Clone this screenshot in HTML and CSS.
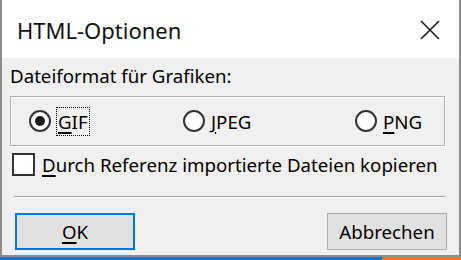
FILE: index.html
```html
<!DOCTYPE html>
<html lang="de">

<head>
    <meta charset="UTF-8">
    <title>HTML-Optionen</title>
    <link rel="stylesheet" href="styles.css">
</head>

<body>
    <div class="dialog">
        <div class="titlebar">
            <span class="title">HTML-Optionen</span>
            <svg class="close" width="20" height="20" viewBox="0 0 20 20">
                <path d="M1 1 L19 19 M19 1 L1 19" stroke="#1a1a1a" stroke-width="1.6" fill="none"/>
            </svg>
        </div>

        <div class="content">
            <div class="label">Dateiformat für Grafiken:</div>

            <div class="group">
                <label class="radio">
                    <span class="dot checked"></span>
                    <span class="focus"><u>G</u>IF</span>
                </label>
                <label class="radio">
                    <span class="dot"></span>
                    <span class="text"><u>J</u>PEG</span>
                </label>
                <label class="radio">
                    <span class="dot"></span>
                    <span class="text"><u>P</u>NG</span>
                </label>
            </div>

            <label class="check">
                <span class="box"></span>
                <span><u>D</u>urch Referenz importierte Dateien kopieren</span>
            </label>

            <hr class="sep">

            <div class="buttons">
                <button class="btn default"><u>O</u>K</button>
                <button class="btn">Abbrechen</button>
            </div>
        </div>
        <div class="taskbar">
            <span class="blue"></span>
            <span class="orange"></span>
        </div>
    </div>
</body>

</html>
```

FILE: styles.css
```css
body {
    margin: 0;
    width: 461px;
    height: 260px;
    overflow: hidden;
    font-family: "Noto Sans", "Open Sans", sans-serif;
    color: #000;
}

u {
    text-decoration-thickness: 2px;
    text-underline-offset: 3px;
}

.dialog {
    display: flex;
    flex-direction: column;
    height: 260px;
    box-sizing: border-box;
    border-left: 2px solid #8c8c8c;
    border-right: 2px solid #8c8c8c;
    background: #f0f0f0;
}

.titlebar {
    display: flex;
    align-items: center;
    justify-content: space-between;
    height: 58px;
    background: #fff;
    padding: 2px 19px 0 15px;
    box-sizing: border-box;
}

.title {
    font-size: 22px;
    color: #111;
}

.content {
    flex: 1;
    padding: 4px 14px 0 8px;
    font-size: 18.7px;
}

.label {
    height: 28px;
    line-height: 28px;
}

.group {
    display: grid;
    grid-template-columns: 154px 172px auto;
    align-items: center;
    height: 48px;
    margin-top: 6px;
    padding: 0 0 0 18px;
    border: 1px solid #b0b0b0;
    box-shadow: inset 1px 1px 0 #fff, 1px 1px 0 #fff;
}

.radio {
    display: flex;
    align-items: center;
    gap: 6px;
}

.dot {
    width: 18px;
    height: 18px;
    border: 2px solid #333;
    border-radius: 50%;
    background: #fff;
    position: relative;
}

.dot.checked::after {
    content: "";
    position: absolute;
    left: 4px;
    top: 4px;
    width: 10px;
    height: 10px;
    border-radius: 50%;
    background: #1a1a1a;
}

.focus {
    outline: 1px dotted #000;
    padding: 1px 1px;
}

.check {
    display: flex;
    align-items: center;
    gap: 7px;
    margin-top: 6px;
    padding-left: 2px;
}

.box {
    width: 19px;
    height: 19px;
    border: 2px solid #333;
    background: #fff;
}

.sep {
    margin: 19px 0 0 4px;
    border: 0;
    border-top: 1px solid #a0a0a0;
    border-bottom: 1px solid #fff;
}

.buttons {
    display: flex;
    justify-content: space-between;
    margin: 15px -2px 0 0;
    padding-left: 5px;
}

.btn {
    width: 120px;
    height: 37px;
    font-family: inherit;
    font-size: 18.7px;
    background: #e1e1e1;
    border: 1px solid #adadad;
    padding: 0;
}

.btn.default {
    border: 2px solid #0078d7;
}

.taskbar {
    display: flex;
    height: 3px;
    border-top: 2px solid #8c8c8c;
    margin: auto -2px 0;
}

.blue {
    flex: 382;
    background: #1e73c8;
}

.orange {
    flex: 79;
    background: #e07a2a;
}
```
